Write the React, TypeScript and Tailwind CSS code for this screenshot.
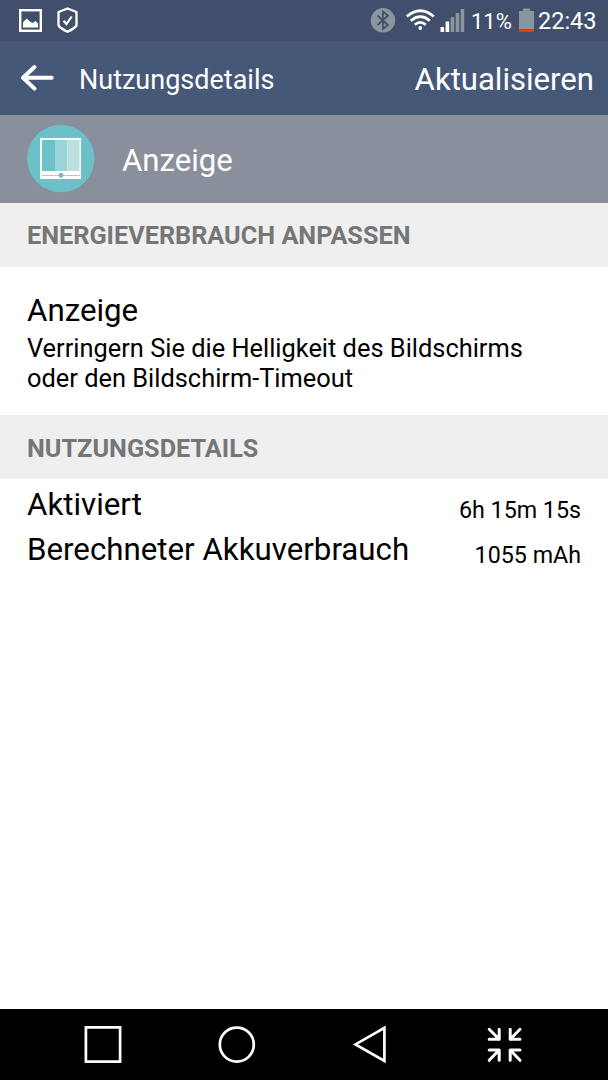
const StatusBar = () => (
    <div className="flex h-[41px] items-center bg-[#414f6c] pr-3 pl-[18px] text-white">
        {/* notifications */}
        <svg width="24" height="41" viewBox="18 0 24 41" fill="none">
            <rect x="20.2" y="10.2" width="20.6" height="20.6" stroke="#fff" strokeWidth="2.4" />
            <path d="M23 27.5v-5l3.5-4 3.5 3 2.5 1.5 3-2 2.5 2.5v4z" fill="#fff" />
        </svg>
        <svg className="ml-[14px]" width="24" height="41" viewBox="56 0 24 41" fill="none" stroke="#fff">
            <path d="M67.5 8.5l9 3.5v13.5q-2 3-9 6.3q-7-3.3-9-6.3V12z" strokeWidth="2.3" strokeLinejoin="round" />
            <path d="M63.5 20.8l3 3.3 5.2-7.6" strokeWidth="2.2" />
        </svg>

        {/* bluetooth */}
        <svg className="ml-auto" width="26" height="41" viewBox="370 0 26 41" fill="none">
            <circle cx="383" cy="20.3" r="12.2" fill="#8b959e" />
            <path d="M377.5 15.5l10.5 9.5-5 4V11.5l5 4-10.5 9.5" stroke="#414f6c" strokeWidth="1.7" />
        </svg>
        {/* wifi */}
        <svg className="ml-[9px]" width="31" height="41" viewBox="405 0 31 41" fill="none" stroke="#fff" strokeWidth="2.7">
            <path d="M406.8 16.5q13.5-11.5 27 0" />
            <path d="M410.8 20.7q9.5-8.2 19 0" />
            <path d="M414.8 24.7q5.5-4.8 11 0" />
            <circle cx="420.3" cy="28" r="1.9" fill="#fff" stroke="none" />
        </svg>
        {/* signal */}
        <svg className="ml-1" width="25" height="41" viewBox="440 0 25 41">
            <path d="M440.5 27h3.6v5h-3.6zM445.6 21.5h3.6V32h-3.6z" fill="#fff" />
            <path d="M450.7 17.2h3.5V32h-3.5zM455.7 13h3.5v19h-3.5zM460.7 9h3.5v23h-3.5z" fill="#8b959e" />
        </svg>
        <span className="ml-[6px] w-12 pt-[2px] text-[22px] leading-none whitespace-nowrap">11%</span>
        {/* battery */}
        <svg width="15" height="41" viewBox="519 0 15 41">
            <path d="M519 11h4V8.5h7V11h4v18h-15z" fill="#8b959e" />
            <path d="M519 29h15v3h-15z" fill="#ff3300" />
        </svg>
        <span className="ml-1 w-[58px] pt-[2px] text-[23.5px] leading-none whitespace-nowrap">22:43</span>
    </div>
)

const SectionTitle = ({ children, className }: { children: string, className: string }) => (
    <h2 className={"flex h-16 items-center bg-[#efefef] pl-[27px] text-[25.25px] leading-none font-bold text-[#757678]" + ` ${className}`}>
        {children}
    </h2>
)

const DetailRow = ({ label, value }: { label: string, value: string }) => (
    <div className="flex h-[45px] items-center justify-between px-[27px]">
        <span className="text-[31.25px] leading-[45px]">{label}</span>
        <span className="pt-[11px] text-[23.25px] leading-[35px]">{value}</span>
    </div>
)

const DisplayIcon = () => (
    <svg width="68" height="68" viewBox="0 0 68 68">
        <circle cx="33.8" cy="33.6" r="33.7" fill="#6bc1c7" />
        <rect x="13" y="13" width="41" height="41" fill="#fff" />
        <path d="M15 15h13v31H15z" fill="#6bc1c7" />
        <path d="M28 15h12.5v31H28z" fill="#9bd4d8" />
        <path d="M40.5 15h12v31h-12z" fill="#bcdfe1" />
        <path d="M15 50.5h38" stroke="#9bd4d8" strokeWidth="1" />
        <circle cx="34" cy="50.2" r="2.5" fill="#6bc1c7" />
    </svg>
)

const NavBar = () => (
    <nav className="flex h-[71px] items-center justify-between bg-black pr-[84px] pl-[83px]">
        <svg width="40" height="71" viewBox="83 0 40 71" fill="none" stroke="#fff" strokeWidth="2.7">
            <rect x="85.9" y="18.4" width="34.2" height="34.2" />
        </svg>
        <svg width="40" height="71" viewBox="217 0 40 71" fill="none" stroke="#fff" strokeWidth="2.7">
            <circle cx="236.8" cy="35.6" r="17" />
        </svg>
        <svg width="40" height="71" viewBox="351 0 40 71" fill="none" stroke="#fff" strokeWidth="2.7">
            <path d="M385.4 18.8V52l-28.9-16.6z" />
        </svg>
        <svg width="40" height="71" viewBox="484 0 40 71" fill="none" stroke="#fff" strokeWidth="3" strokeLinecap="round" strokeLinejoin="round">
            <path d="M489.2 20.3l10 10M489.2 30.3h10v-10" />
            <path d="M520 20.3l-9.8 10M520 30.3h-9.8v-10" />
            <path d="M489.2 51.3l10-10.3M489.2 41h10v10.3" />
            <path d="M520 51.3L510.2 41M520 41h-9.8v10.3" />
        </svg>
    </nav>
)

const App = () => {
    return (
        <div className="flex h-[1080px] w-[608px] flex-col overflow-hidden bg-white font-['Roboto',sans-serif] text-black">
            <StatusBar />

            <header className="flex h-[74px] items-center bg-[#465878] pr-[14px] pl-5 text-white">
                <svg width="34" height="28" viewBox="0 0 34 28" fill="none" stroke="#fff" strokeWidth="4" strokeLinecap="round" strokeLinejoin="round">
                    <path d="M14.5 3L3 13.8l11.5 10.8M3 13.8h28.7" />
                </svg>
                <h1 className="grow pt-1 pl-[25px] text-[27px] leading-none">Nutzungsdetails</h1>
                <button className="pt-[3px] text-[31.1px] leading-none">Aktualisieren</button>
            </header>

            <div className="flex h-[88px] items-center bg-[#898f9b] pl-[27px] text-white">
                <DisplayIcon />
                <span className="pt-[3px] pl-[27px] text-[31.1px] leading-none">Anzeige</span>
            </div>

            <SectionTitle className="pt-px">ENERGIEVERBRAUCH ANPASSEN</SectionTitle>
            <div className="h-[148px] pt-[24px] pl-[27px]">
                <p className="text-[31.25px] leading-[40px]">Anzeige</p>
                <p className="mt-[2px] text-[25.4px] leading-[30px]">
                    Verringern Sie die Helligkeit des Bildschirms<br />
                    oder den Bildschirm-Timeout
                </p>
            </div>

            <SectionTitle className="pt-[3px]">NUTZUNGSDETAILS</SectionTitle>
            <div className="grow pt-[3px]">
                <DetailRow label="Aktiviert" value="6h 15m 15s" />
                <DetailRow label="Berechneter Akkuverbrauch" value="1055 mAh" />
            </div>

            <NavBar />
        </div>
    )
}

export default App
